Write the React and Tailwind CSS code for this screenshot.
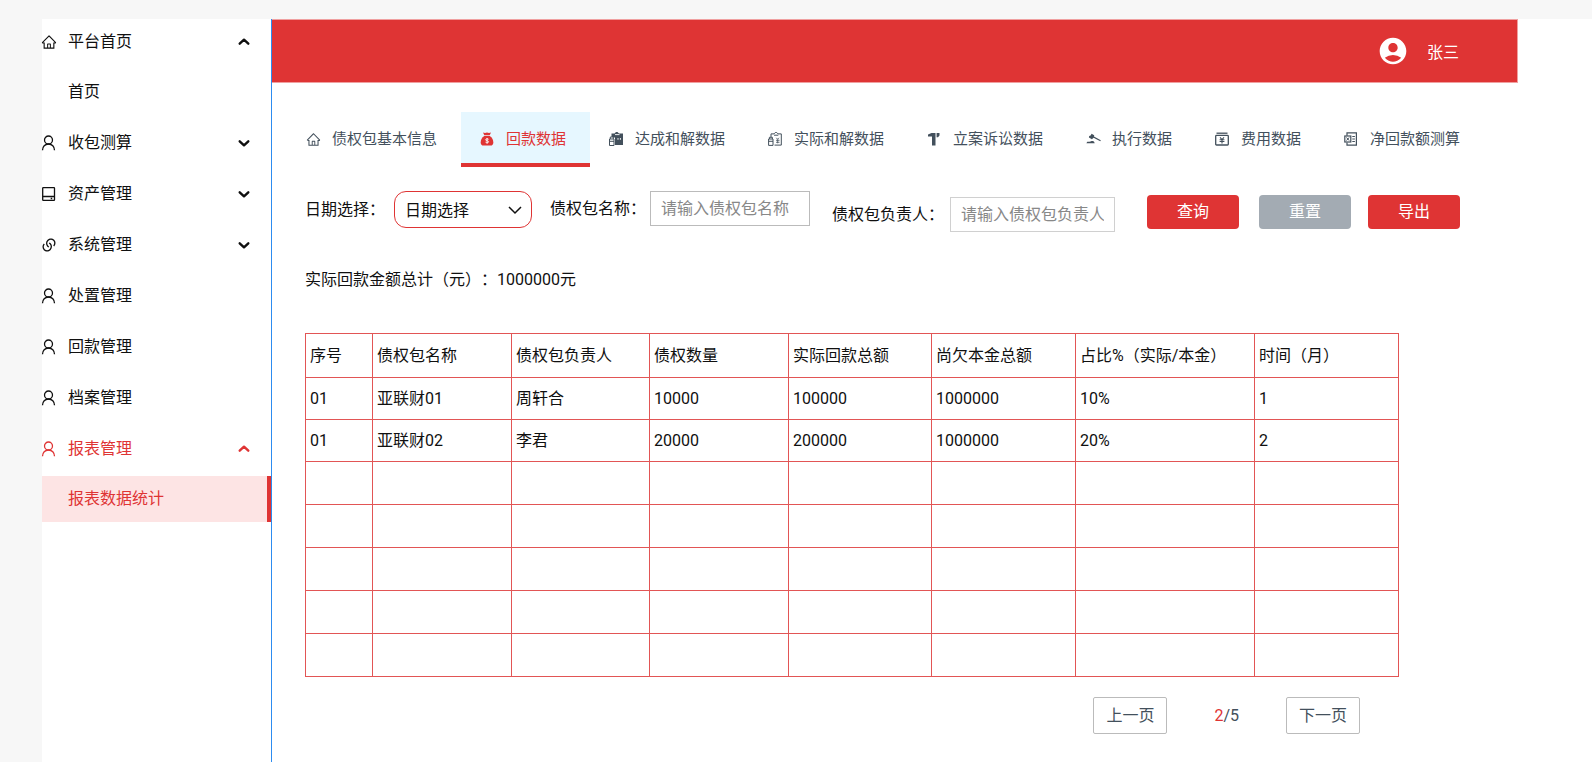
import React, { useState } from "react";
import { AiOutlineHome } from "react-icons/ai";
import { RiLinksLine } from "react-icons/ri";
import { MdAccountCircle } from "react-icons/md";

const UserIcon = () => (
  <svg width="16" height="16" viewBox="0 0 16 16" fill="none" stroke="currentColor" strokeWidth="1.300">
    <circle cx="7.500" cy="5" r="4" />
    <path d="M1.500 15.300c0-3.600 2.500-6.300 6-6.300s6 2.700 6 6.300" />
  </svg>
);

const DriveIcon = () => (
  <svg width="16" height="16" viewBox="0 0 16 16" fill="none" stroke="currentColor" strokeWidth="1.300">
    <rect x="1.700" y="1.700" width="11.800" height="12.600" rx=".6" />
    <path d="M1.700 10.500h11.800M9.700 12.500h1.500" />
  </svg>
);

const MoneyBagIcon = () => (
  <svg width="14" height="14" viewBox="0 0 14 14" fill="currentColor">
    <path d="M3 .5 5 1.100 7 .5l2 .6 2-.6-1.300 2.700H4.300z" />
    <path d="M4.200 4h5.600C12 5.300 13.300 8 13.300 10.500c0 2-1 3.100-2.800 3.100h-7C1.700 13.600.7 12.500.7 10.500.7 8 2 5.300 4.200 4z" />
    <path
      d="M8.600 7.300C8.200 6.800 5.600 6.500 5.600 7.800c0 1.400 3 .6 3 2 0 1.300-2.600 1.100-3.100.4M7.100 6v5.600"
      fill="none"
      stroke="#fff"
      strokeWidth=".9"
    />
  </svg>
);

const ClipboardFilledIcon = () => (
  <svg width="14" height="14" viewBox="0 0 14 14">
    <path d="M2.500 1.500h3L7 0h1.500L10 1.500h4V13H6V5.500H2.500z" fill="currentColor" />
    <path d="M6 2.600h4.500M9 6v1.800M11.400 6v1.800" stroke="#fff" strokeWidth=".9" />
    <path d="M.5 7h4.500v6.500H.5zM.5 9.300H5M1.300 7V5h3v2" fill="#fff" stroke="currentColor" />
  </svg>
);

const ClipboardIcon = () => (
  <svg width="14" height="14" viewBox="0 0 14 14" fill="none" stroke="currentColor">
    <path d="M3 5V1.900h3L7.300.5h1.400L10 1.900h3.300v11.200H6.500" />
    <path d="M6 3.200h4.300" />
    <path d="M.6 7h4.400v6.400H.6zM.6 9.300H5M1.400 7V5.300h3V7" />
    <path d="m8.300 5.800 1.300 1.500 1.300-1.500M8 8.300h3.500M8 10.300h3.500M9.700 7.300v4" strokeWidth=".8" />
  </svg>
);

const LawsuitIcon = () => (
  <svg width="14" height="14" viewBox="0 0 14 14" fill="currentColor">
    <path d="M1 2.600 4.500.9h4V13.500H5V4.500H1zM9.600 1h2.900v2.500L11 5.300H9.600z" />
  </svg>
);

const GavelIcon = () => (
  <svg width="15" height="14" viewBox="0 0 15 14" fill="currentColor">
    <path d="m5.600 1.800 2.600 1.500-.2 1.300 6.800 3.700-.5 1-6.700-3.500-1.700 1.400-3-1.600.3-1.500 1.400-.5z" />
    <path d="M1.300 9.700c1.700.6 3.600-.6 5.300-.6 1.200 0 1.600.8 2.100 2.200H.4z" />
  </svg>
);

const FeeIcon = () => (
  <svg width="14" height="14" viewBox="0 0 14 14" fill="none" stroke="currentColor">
    <path d="M1.500 1.200h11" strokeWidth="1.300" />
    <rect x=".7" y="3.400" width="12.600" height="9.600" rx=".8" strokeWidth="1.300" />
    <path d="m5 5.300 2 2.200 2-2.200M4.600 7.700h4.800M4.600 9.500h4.800M7 7.500v4" strokeWidth="1.100" />
  </svg>
);

const ReportIcon = () => (
  <svg width="14" height="14" viewBox="0 0 14 14" fill="none" stroke="currentColor">
    <path d="M3 3.800V.9h9.400v12.200H3v-2.600" strokeWidth="1.200" />
    <rect x=".8" y="4" width="6" height="6" strokeWidth="1.200" />
    <path d="m2.500 5.500 2.600 3M5.100 5.500l-2.600 3M8.300 4.500h2.600M8.300 7h2.600M8.300 9.500h2.600" />
  </svg>
);

const Chevron = ({ open }) => (
  <svg
    width="12"
    height="12"
    viewBox="0 0 12 12"
    fill="none"
    stroke="currentColor"
    strokeWidth="2.400"
    strokeLinecap="round"
    strokeLinejoin="round"
  >
    <path d={open ? "M1.700 7.700 6 3.700l4.300 4" : "M1.700 4.300 6 8.300l4.300-4"} />
  </svg>
);

const menu = [
  { label: "平台首页", icon: AiOutlineHome, expand: true, children: ["首页"] },
  { label: "收包测算", icon: UserIcon, expand: true },
  { label: "资产管理", icon: DriveIcon, expand: true },
  { label: "系统管理", icon: RiLinksLine, expand: true },
  { label: "处置管理", icon: UserIcon },
  { label: "回款管理", icon: UserIcon },
  { label: "档案管理", icon: UserIcon },
  { label: "报表管理", icon: UserIcon, expand: true, active: true, children: ["报表数据统计"] },
];

const tabs = [
  { label: "债权包基本信息", icon: AiOutlineHome },
  { label: "回款数据", icon: MoneyBagIcon },
  { label: "达成和解数据", icon: ClipboardFilledIcon },
  { label: "实际和解数据", icon: ClipboardIcon },
  { label: "立案诉讼数据", icon: LawsuitIcon },
  { label: "执行数据", icon: GavelIcon },
  { label: "费用数据", icon: FeeIcon },
  { label: "净回款额测算", icon: ReportIcon },
];

const columns = [
  { title: "序号", width: "w-[67px]" },
  { title: "债权包名称", width: "w-[139px]" },
  { title: "债权包负责人", width: "w-[138px]" },
  { title: "债权数量", width: "w-[139px]" },
  { title: "实际回款总额", width: "w-[143px]" },
  { title: "尚欠本金总额", width: "w-[144px]" },
  { title: "占比%（实际/本金）", width: "w-[179px]" },
  { title: "时间（月）", width: "w-[144px]" },
];

const rows = [
  ["01", "亚联财01", "周轩合", "10000", "100000", "1000000", "10%", "1"],
  ["01", "亚联财02", "李君", "20000", "200000", "1000000", "20%", "2"],
];

const emptyRows = [1, 2, 3, 4, 5];

const Sidebar = () => (
  <aside className="w-[230px] shrink-0 border-r border-[#2d8cf0]">
    <nav className="flex flex-col gap-[5px]">
      {menu.map((item) => (
        <div key={item.label} className="flex flex-col gap-1">
          <a
            href="#"
            className={`flex h-[46px] items-center pr-[21px] ${
              item.active ? "text-[#df3434]" : "text-[#101010]"
            }`}
          >
            <span className="-ml-px flex w-[27px]">
              <item.icon size={16} />
            </span>
            <span className="flex-1">{item.label}</span>
            {item.expand && <Chevron open={Boolean(item.children)} />}
          </a>
          {item.children?.map((child) => (
            <a
              key={child}
              href="#"
              className={`flex h-[46px] items-center pl-[26px] ${
                item.active
                  ? "border-r-4 border-[#df3434] bg-[#fde4e4] text-[#df3434]"
                  : "text-[#101010]"
              }`}
            >
              {child}
            </a>
          ))}
        </div>
      ))}
    </nav>
  </aside>
);

const App = () => {
  const [tab, setTab] = useState("回款数据");
  const [name, setName] = useState("");
  const [owner, setOwner] = useState("");

  return (
    <div className="min-h-screen bg-[#f7f7f7] pt-[19px] pl-[42px] font-['Roboto','Noto_Sans_CJK_SC',sans-serif] text-base text-[#101010] [text-spacing-trim:space-all]">
      <div className="flex min-h-[calc(100vh-19px)] bg-white">
        <Sidebar />

        <div className="min-w-0 flex-1">
          <header className="mr-[74px] flex h-16 items-center justify-end border border-l-0 border-[#f0a0a0] bg-[#df3434] pr-[58px] text-white">
            <MdAccountCircle size={32} className="mr-[18px]" />
            <span className="pt-1">张三</span>
          </header>

          <div className="mt-[29px] ml-[15px] flex">
            {tabs.map((t) => (
              <button
                key={t.label}
                type="button"
                onClick={() => setTab(t.label)}
                className={`flex h-[55px] shrink-0 items-center border-b-4 pt-[3px] pr-6 pl-[19px] text-[15px] ${
                  tab === t.label
                    ? "border-[#df3434] bg-[#e6f7ff] text-[#df3434]"
                    : "border-transparent text-[#43505c]"
                }`}
              >
                <span className="mr-[11px] flex w-[15px]">
                  <t.icon size={15} />
                </span>
                {t.label}
              </button>
            ))}
          </div>

          <div className="pr-[57px] pl-[33px]">
            <div className="mt-6 flex h-[41px] items-center">
              <div className="flex items-center self-start">
                <label htmlFor="date">日期选择：</label>
                <div className="relative ml-[9px]">
                  <select
                    id="date"
                    className="h-[37px] w-[138px] appearance-none rounded-xl border border-[#df3434] bg-white pt-[3px] pl-[10px]"
                  >
                    <option>日期选择</option>
                  </select>
                  <svg
                    className="pointer-events-none absolute top-3 right-[10px]"
                    width="14"
                    height="14"
                    viewBox="0 0 14 14"
                    fill="none"
                    stroke="currentColor"
                    strokeWidth="1.500"
                  >
                    <path d="m1 4 6 6 6-6" />
                  </svg>
                </div>
              </div>
              <div className="ml-[18px] flex items-center self-start">
                <label htmlFor="name">债权包名称：</label>
                <input
                  id="name"
                  value={name}
                  onChange={(e) => setName(e.target.value)}
                  placeholder="请输入债权包名称"
                  className="ml-1 h-[35px] w-40 border border-[#bbbbbb] px-[10px] placeholder:text-[#888888]"
                />
              </div>
              <div className="ml-[22px] flex items-center self-end">
                <label htmlFor="owner">债权包负责人：</label>
                <input
                  id="owner"
                  value={owner}
                  onChange={(e) => setOwner(e.target.value)}
                  placeholder="请输入债权包负责人"
                  className="ml-1.5 h-[35px] w-[165px] border border-[#d0d0d0] px-[10px] placeholder:text-[#888888]"
                />
              </div>
              <button type="button" className="ml-8 h-[34px] w-[92px] rounded bg-[#df3434] text-white">
                查询
              </button>
              <button type="button" className="ml-5 h-[34px] w-[92px] rounded bg-[#a3abb3] text-white">
                重置
              </button>
              <button type="button" className="ml-[17px] h-[34px] w-[92px] rounded bg-[#df3434] text-white">
                导出
              </button>
            </div>

            <p className="mt-9">实际回款金额总计（元）：1000000元</p>

            <div className="mt-[41px] mr-[137px]">
              <table className="w-full table-fixed border-collapse border border-[#e25555] text-left">
                <thead>
                  <tr className="h-11">
                    {columns.map((col) => (
                      <th key={col.title} className={`border border-[#e25555] px-1 font-normal ${col.width}`}>
                        {col.title}
                      </th>
                    ))}
                  </tr>
                </thead>
                <tbody>
                  {rows.map((row, index) => (
                    <tr key={index} className="h-[42px]">
                      {row.map((cell, i) => (
                        <td key={i} className="border border-[#e25555] px-1">
                          {cell}
                        </td>
                      ))}
                    </tr>
                  ))}
                  {emptyRows.map((row) => (
                    <tr key={row} className="h-[43px]">
                      {columns.map((col) => (
                        <td key={col.title} className="border border-[#e25555]"></td>
                      ))}
                    </tr>
                  ))}
                </tbody>
              </table>

              <div className="mt-5 flex items-center justify-end gap-[47px] pr-[38px] text-[#43505c]">
                <button type="button" className="h-[37px] w-[74px] rounded-xs border border-[#bbbbbb]">
                  上一页
                </button>
                <span>
                  <span className="text-[#df3434]">2</span>/5
                </span>
                <button type="button" className="h-[37px] w-[74px] rounded-xs border border-[#bbbbbb]">
                  下一页
                </button>
              </div>
            </div>
          </div>
        </div>
      </div>
    </div>
  );
};

export default App;
